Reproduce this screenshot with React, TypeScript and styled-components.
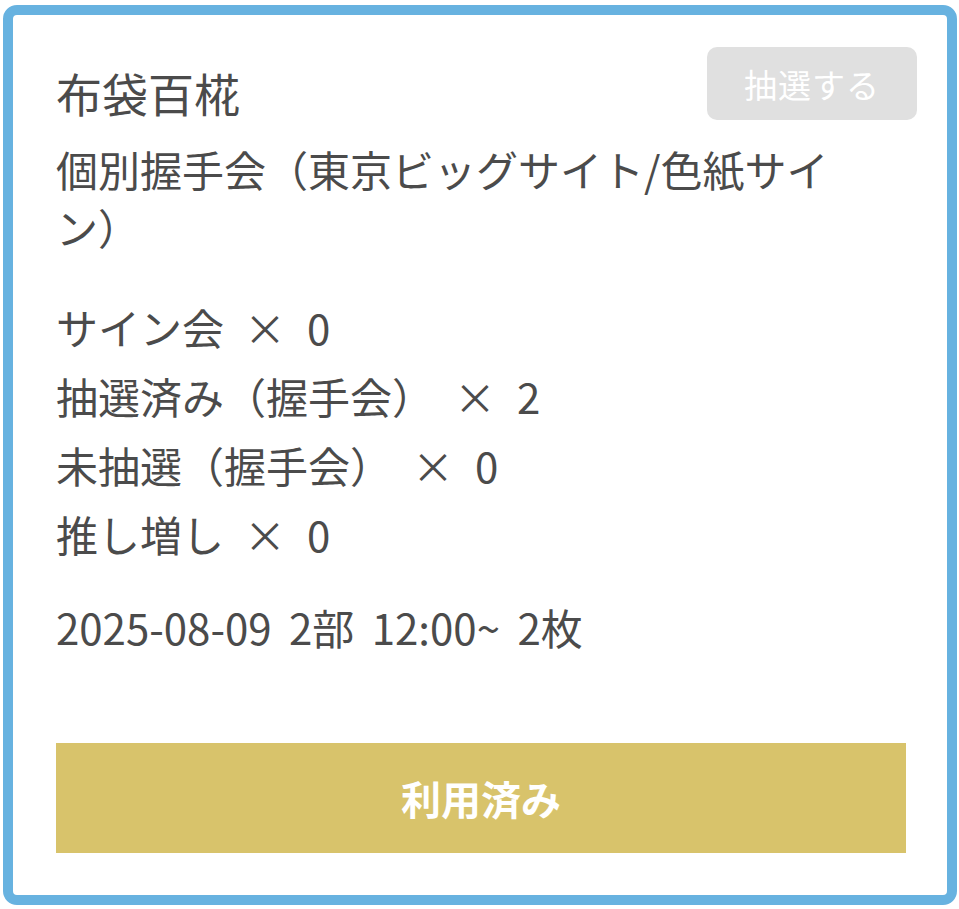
import { FC } from "react";
import styled, { createGlobalStyle } from "styled-components";

const GlobalStyle = createGlobalStyle`
  body {
    margin: 0;
    background: #ffffff;
    font-family: "Noto Sans CJK JP", "Noto Sans", sans-serif;
    color: #4b4b4b;
  }
`;

const Card = styled.div`
  margin: 5px 2px 4px 3px;
  border: 10px solid #67b2e0;
  border-radius: 14px;
  background: #ffffff;
  padding: 32px 41px 42px 43px;
`;

const Header = styled.div`
  display: flex;
  justify-content: space-between;
  align-items: flex-start;
`;

const Name = styled.h2`
  margin: 14px 0 0;
  font-size: 46px;
  font-weight: 400;
  line-height: 63px;
`;

const DrawButton = styled.button`
  width: 210px;
  height: 73px;
  margin-right: -11px;
  border: none;
  border-radius: 10px;
  background: #e0e0e0;
  color: #ffffff;
  font-family: inherit;
  font-size: 33px;
  letter-spacing: 1px;
  cursor: not-allowed;
`;

const EventTitle = styled.div`
  margin-top: 16px;
  max-width: 800px;
  font-size: 42px;
  line-height: 58px;
`;

const Counts = styled.ul`
  list-style: none;
  margin: 36px 0 0;
  padding: 0;
`;

const CountRow = styled.li`
  display: flex;
  align-items: baseline;
  font-size: 42px;
  line-height: 69px;
`;

const Times = styled.span`
  margin: 0 21px 0 20px;
`;

const Slot = styled.div`
  margin-top: 30px;
  font-size: 42px;
  line-height: 58px;
  word-spacing: 8px;
`;

const UsedButton = styled.button`
  display: block;
  width: 100%;
  height: 110px;
  margin-top: 87px;
  border: none;
  background: #d8c36b;
  color: #ffffff;
  font-family: inherit;
  font-size: 40px;
  font-weight: 700;
`;

interface Count {
  label: string;
  value: number;
}

const counts: Count[] = [
  { label: "サイン会", value: 0 },
  { label: "抽選済み（握手会）", value: 2 },
  { label: "未抽選（握手会）", value: 0 },
  { label: "推し増し", value: 0 },
];

const TicketCard: FC = () => (
  <Card>
    <Header>
      <Name>布袋百椛</Name>
      <DrawButton disabled>抽選する</DrawButton>
    </Header>
    <EventTitle>個別握手会（東京ビッグサイト/色紙サイン）</EventTitle>
    <Counts>
      {counts.map((c) => (
        <CountRow key={c.label}>
          <span>{c.label}</span>
          <Times>×</Times>
          <span>{c.value}</span>
        </CountRow>
      ))}
    </Counts>
    <Slot>2025-08-09 2部 12:00~ 2枚</Slot>
    <UsedButton>利用済み</UsedButton>
  </Card>
);

export default function App() {
  return (
    <>
      <GlobalStyle />
      <TicketCard />
    </>
  );
}
